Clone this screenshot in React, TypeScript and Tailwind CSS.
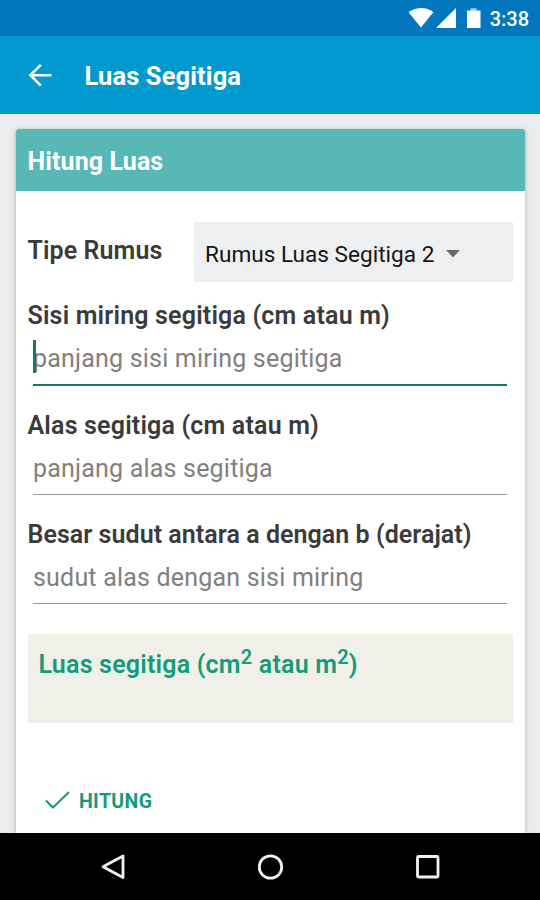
import React from "react";

function StatusBar() {
  return (
    <div className="flex h-9 shrink-0 items-center justify-end bg-[#0277be] pr-[11px] text-white">
      <svg width="74" height="24" viewBox="0 0 74 24" fill="#fff" className="mr-[7px]">
        <path d="M-0.500 6.200C7.500 0.600 17.500 0.600 24.300 6.200L12 21.500Z" />
        <path d="M47 2V22H27Z" />
        <path d="M61.500 2.200h6v2.500h-6z" opacity="0.65" />
        <path d="M58 4.500h13.500v17.500h-13.500z" />
      </svg>
      <span className="pt-[2px] text-[20px] leading-9 font-medium">3:38</span>
    </div>
  );
}

function AppBar() {
  return (
    <header className="flex h-[78px] shrink-0 items-center bg-[#0299ce] pl-[28px] text-white">
      <svg width="24" height="24" viewBox="0 0 24 24" fill="none" stroke="#fff" strokeWidth="2.600">
        <path d="M23.500 12.200H3M12.800 1.800L2.400 12.200L12.800 22.600" />
      </svg>
      <h1 className="ml-[32.500px] pt-[1px] text-[25.500px] leading-[78px] font-bold tracking-[0.100px] whitespace-nowrap">Luas Segitiga</h1>
    </header>
  );
}

type FieldProps = { label: string; placeholder: string; focused?: boolean; tight?: boolean };

function Field({ label, placeholder, focused, tight }: FieldProps) {
  return (
    <div className="h-[109.700px] whitespace-nowrap">
      <div
        className={
          tight
            ? "h-[34px] text-[25px] leading-[36px] font-semibold tracking-[0.050px] text-[#3b3b3b]"
            : "h-[34px] text-[25px] leading-[36px] font-semibold tracking-[0.180px] text-[#3b3b3b]"
        }
      >
        {label}
      </div>
      <div
        className={
          focused
            ? "relative mx-[5.500px] h-[54px] border-b-[2.500px] border-[#157a6c] text-[25px] leading-[53px] tracking-[0.200px] text-[#808080]"
            : "relative mx-[5.500px] h-[53px] border-b border-[#9a9a9a] text-[25px] leading-[53px] tracking-[0.200px] text-[#808080]"
        }
      >
        {placeholder}
        {focused && <span className="absolute top-[8px] left-0 h-[33px] w-[2.500px] bg-[#157a6c]" />}
      </div>
    </div>
  );
}

function NavBar() {
  return (
    <nav className="flex h-[67px] shrink-0 items-center justify-center bg-black">
      <svg width="540" height="67" viewBox="0 0 540 67" fill="none" stroke="#f2f2f2" strokeWidth="2.800" strokeLinejoin="round">
        <path d="M123 23V44.500L103 33.700Z" />
        <circle cx="270.500" cy="34" r="11.200" />
        <rect x="417.500" y="23.500" width="20.500" height="20.500" rx="1" />
      </svg>
    </nav>
  );
}

export default function App() {
  return (
    <div className="flex h-[900px] w-[540px] flex-col overflow-hidden bg-[#ececec] font-['Roboto','Noto_Sans',sans-serif]">
      <StatusBar />
      <AppBar />
      <main className="flex min-h-0 flex-1 flex-col overflow-hidden px-[15.500px] pt-[14.500px]">
        <section className="flex flex-1 flex-col rounded-t-[3px] bg-white shadow-[0_1px_4px_rgba(0,0,0,0.3)]">
          <h2 className="h-[62px] shrink-0 rounded-t-[3px] bg-[#57b8b6] pl-[12px] text-[25px] leading-[65px] font-bold tracking-[0.100px] text-white">
            Hitung Luas
          </h2>
          <div className="px-[12px] pt-[31.500px]">
            <div className="flex h-[60px] whitespace-nowrap">
              <span className="w-[166.500px] text-[25px] leading-[58px] font-semibold tracking-[0.100px] text-[#3b3b3b]">Tipe Rumus</span>
              <div className="flex flex-1 items-center bg-[#edeff1] pl-[11px] text-[22.600px] leading-[60px] text-[#151515]">
                <span className="pt-[6px]">Rumus Luas Segitiga 2</span>
                <svg width="14" height="8" viewBox="0 0 14 8" className="mt-[3px] ml-[12px]">
                  <path d="M0 0H14L7 7.500Z" fill="#6b6b6b" />
                </svg>
              </div>
            </div>
            <div className="pt-[16px]">
              <Field label="Sisi miring segitiga (cm atau m)" placeholder="panjang sisi miring segitiga" focused />
              <Field label="Alas segitiga (cm atau m)" placeholder="panjang alas segitiga" />
              <Field label="Besar sudut antara a dengan b (derajat)" placeholder="sudut alas dengan sisi miring" tight />
            </div>
            <div className="mt-[7px] h-[89px] bg-[#f0f0e8] pl-[11px] text-[25px] leading-[61px] font-semibold tracking-[0.200px] whitespace-nowrap text-[#149b7b]">
              Luas segitiga (cm<sup className="top-[-9px] text-[20px]">2</sup> atau m
              <sup className="top-[-9px] text-[20px]">2</sup>)
            </div>
            <button className="mt-[62px] flex items-center pl-[17px] text-[19.500px] leading-[30px] font-bold tracking-[0.350px] text-[#149b7b]">
              <svg width="25" height="19" viewBox="0 0 25 19" fill="none" stroke="#149b7b" strokeWidth="2">
                <path d="M1 9.500L8 16.500L24 1" />
              </svg>
              <span className="ml-[9.500px] pt-[1.500px]">HITUNG</span>
            </button>
          </div>
        </section>
      </main>
      <NavBar />
    </div>
  );
}
